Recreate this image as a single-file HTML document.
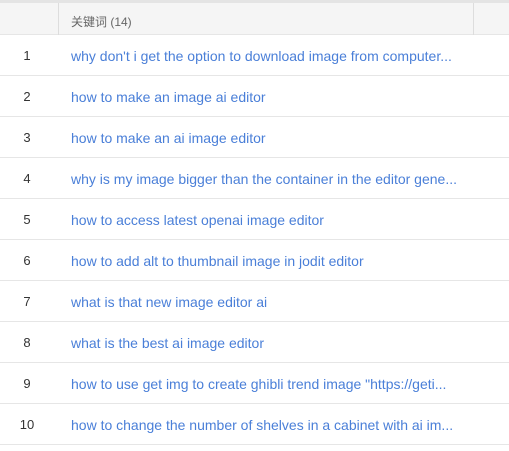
<!DOCTYPE html>
<html><head><meta charset="utf-8"><style>
body{margin:0;width:509px;height:451px;background:#fff;font-family:"Liberation Sans","Noto Sans CJK SC",sans-serif;overflow:hidden;position:relative}
.top{position:absolute;left:0;top:0;width:509px;height:3px;background:#e4e4e4}
.hdr{position:absolute;left:0;top:3px;width:509px;height:32px;background:#f5f5f5;border-bottom:1px solid #e6e6e6;box-sizing:border-box}
.hdr .d{position:absolute;top:0;width:1px;height:32px;background:#ddd}
.hdr span{position:absolute;left:71px;top:10px;font-size:12px;color:#666}
.row{position:absolute;left:0;width:509px;height:41px;border-bottom:1px solid #e6e6e6;box-sizing:border-box}
.n{position:absolute;left:0;width:54px;text-align:center;top:13px;font-size:13px;color:#333}
.t{position:absolute;left:71px;top:13px;font-size:14px;color:#4a7fd8;white-space:nowrap}
</style></head><body>
<div class="top"></div>
<div class="hdr"><div class="d" style="left:58px"></div><div class="d" style="left:473px"></div><span>关键词 (14)</span></div>
<div class="row" style="top:35px"><div class="n">1</div><div class="t">why don't i get the option to download image from computer...</div></div>
<div class="row" style="top:76px"><div class="n">2</div><div class="t">how to make an image ai editor</div></div>
<div class="row" style="top:117px"><div class="n">3</div><div class="t">how to make an ai image editor</div></div>
<div class="row" style="top:158px"><div class="n">4</div><div class="t">why is my image bigger than the container in the editor gene...</div></div>
<div class="row" style="top:199px"><div class="n">5</div><div class="t">how to access latest openai image editor</div></div>
<div class="row" style="top:240px"><div class="n">6</div><div class="t">how to add alt to thumbnail image in jodit editor</div></div>
<div class="row" style="top:281px"><div class="n">7</div><div class="t">what is that new image editor ai</div></div>
<div class="row" style="top:322px"><div class="n">8</div><div class="t">what is the best ai image editor</div></div>
<div class="row" style="top:363px"><div class="n">9</div><div class="t">how to use get img to create ghibli trend image "https://geti...</div></div>
<div class="row" style="top:404px"><div class="n">10</div><div class="t">how to change the number of shelves in a cabinet with ai im...</div></div>
</body></html>
